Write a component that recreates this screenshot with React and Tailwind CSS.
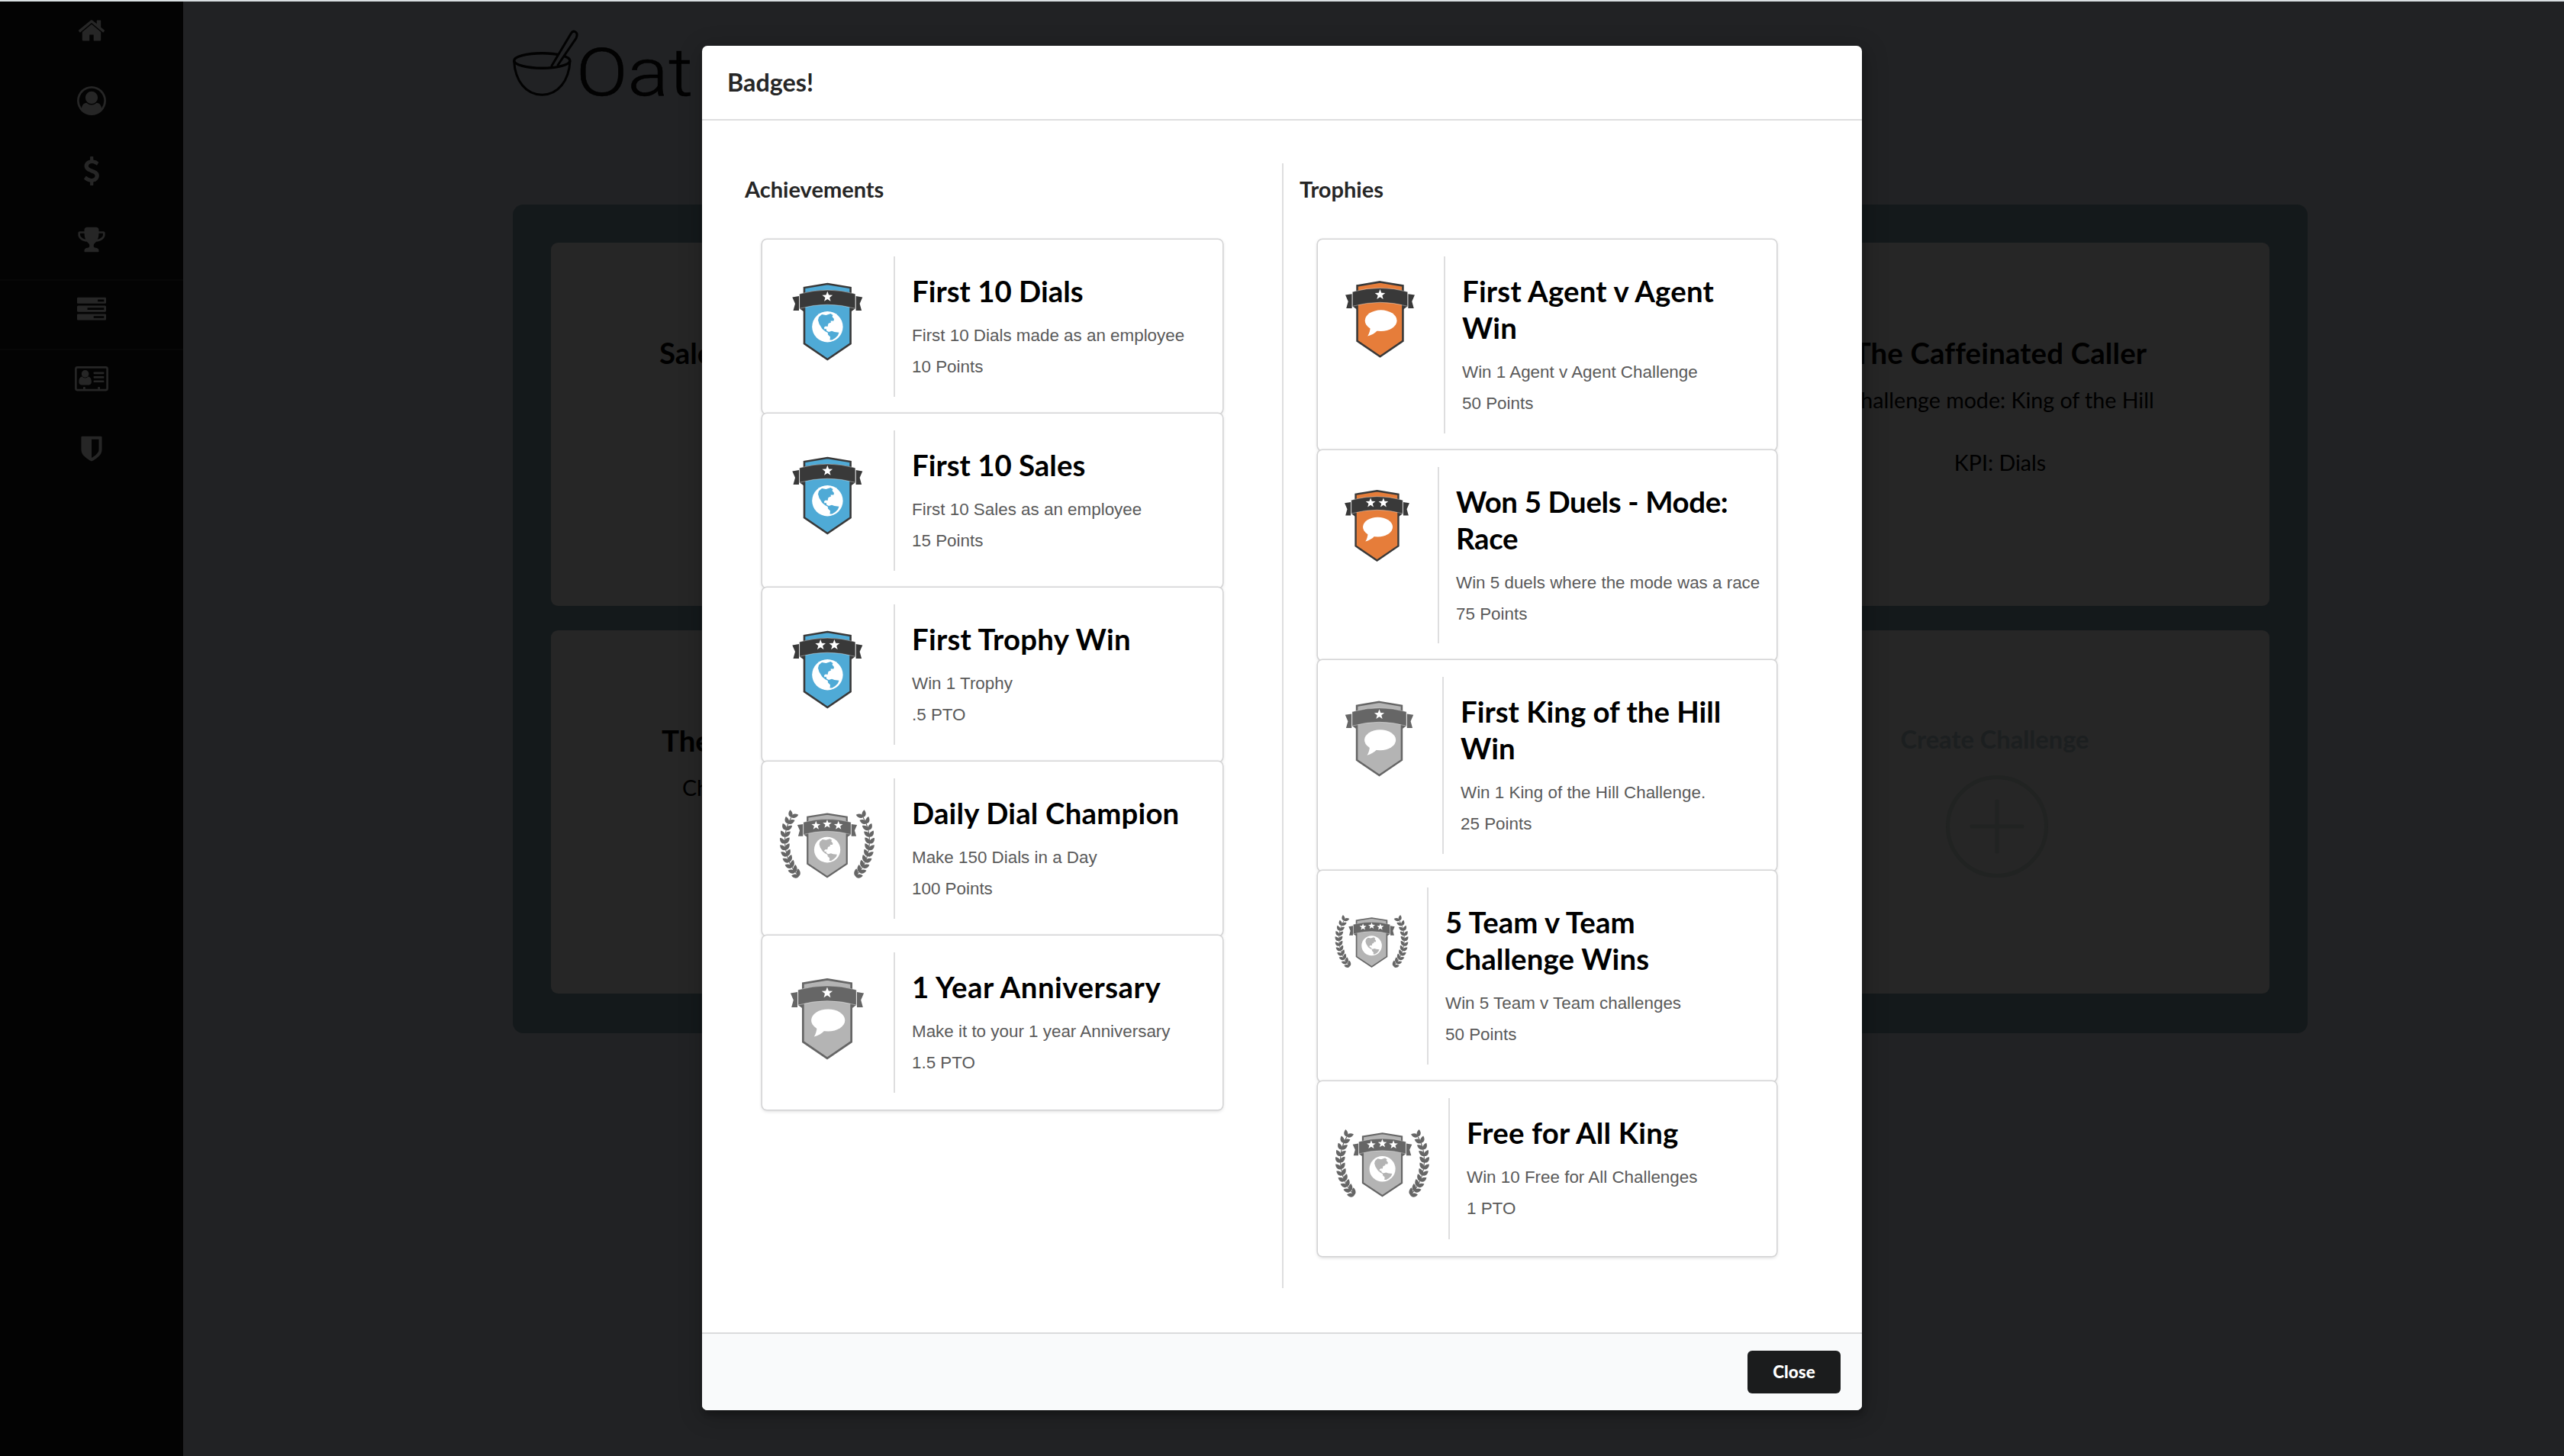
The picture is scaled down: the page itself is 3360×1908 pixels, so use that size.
import React from "react";

const achievements = [
  { title: "First 10 Dials", text: "First 10 Dials made as an employee", reward: "10 Points", art: "globe", tone: "blue", stars: 1 },
  { title: "First 10 Sales", text: "First 10 Sales as an employee", reward: "15 Points", art: "globe", tone: "blue", stars: 1 },
  { title: "First Trophy Win", text: "Win 1 Trophy", reward: ".5 PTO", art: "globe", tone: "blue", stars: 2, tracking: "tracking-[0.25px]" },
  { title: "Daily Dial Champion", text: "Make 150 Dials in a Day", reward: "100 Points", art: "laurel", tone: "gray", stars: 3, tracking: "tracking-[0.18px]" },
  { title: "1 Year Anniversary", text: "Make it to your 1 year Anniversary", reward: "1.5 PTO", art: "comment", tone: "gray", stars: 1, tracking: "tracking-[0.5px]" },
];

const trophies = [
  { title: "First Agent v Agent\nWin", text: "Win 1 Agent v Agent Challenge", reward: "50 Points", art: "comment", tone: "orange", stars: 1, size: "w-[121px]", height: "h-[276px]", tracking: "tracking-[0.2px]" },
  { title: "Won 5 Duels - Mode:\nRace", text: "Win 5 duels where the mode was a race", reward: "75 Points", art: "comment", tone: "orange", stars: 2, size: "w-[113px]", height: "h-[275px]", tracking: "tracking-[-0.35px]" },
  { title: "First King of the Hill\nWin", text: "Win 1 King of the Hill Challenge.", reward: "25 Points", art: "comment", tone: "gray", stars: 1, size: "w-[119px]", height: "h-[276px]" },
  { title: "5 Team v Team\nChallenge Wins", text: "Win 5 Team v Team challenges", reward: "50 Points", art: "laurel", tone: "gray", stars: 3, size: "w-[99px] mt-[4px]", height: "h-[276px]", tracking: "tracking-[0.1px]" },
  { title: "Free for All King", text: "Win 10 Free for All Challenges", reward: "1 PTO", art: "laurel", tone: "gray", stars: 3, size: "w-[127px]", height: "h-[229px]", tracking: "tracking-[0.2px]" },
];

const tones = {
  blue: { fill: "#4faad6", dark: "#393939" },
  orange: { fill: "#e67d3a", dark: "#393939" },
  gray: { fill: "#b4b4b4", dark: "#666666" },
};

function starPoints(cx, cy, r) {
  return Array.from({ length: 10 }, (_, i) => {
    const a = (Math.PI / 5) * i - Math.PI / 2;
    const q = i % 2 ? r * 0.42 : r;
    return `${(cx + q * Math.cos(a)).toFixed(2)},${(cy + q * Math.sin(a)).toFixed(2)}`;
  }).join(" ");
}

const starPlaces = {
  1: [[64.3, 53]],
  2: [[55.2, 53.2], [73.4, 53.2]],
  3: [[47, 54.2], [64.3, 52], [81.6, 54.2]],
};

// One side of the wreath: paired leaves along a curved stem.
const leaves = Array.from({ length: 11 }, (_, i) => {
  const t = i / 10;
  const u = 1 - t;
  const p = [[17, 51], [1, 78], [10, 112], [27, 128]];
  const b = [u * u * u, 3 * u * u * t, 3 * u * t * t, t * t * t];
  const x = p.reduce((s, q, k) => s + q[0] * b[k], 0);
  const y = p.reduce((s, q, k) => s + q[1] * b[k], 0);
  const d = [u * u, 2 * u * t, t * t];
  const dx = d.reduce((s, w, k) => s + w * (p[k + 1][0] - p[k][0]), 0);
  const dy = d.reduce((s, w, k) => s + w * (p[k + 1][1] - p[k][1]), 0);
  return { x, y, a: (Math.atan2(-dy, -dx) * 180) / Math.PI };
});

const LEAF = "M0 0C1.5-3.600 6-4.200 9.800 0C6 3.200 1.500 2.800 0 0Z";

function Wreath({ color }) {
  return (
    <g fill={color}>
      <path d="M17 51C1 78 10 112 27 128" fill="none" stroke={color} strokeWidth="1.1" />
      {leaves.map((l, i) => (
        <g key={i} transform={`translate(${l.x} ${l.y}) rotate(${l.a})`}>
          <path d={LEAF} transform="rotate(-40)" />
          <path d={LEAF} transform="rotate(40)" />
        </g>
      ))}
    </g>
  );
}

const place = {
  globe: undefined,
  comment: "translate(64 34) scale(1.045) translate(-64.3 -34.7)",
  laurel: "translate(64 45.5) scale(.85 .835) translate(-64.3 -34.7)",
};

function Badge({ art, tone, stars, className }) {
  const { fill, dark } = tones[tone];
  return (
    <svg viewBox="0 0 128 150" className={`block shrink-0 self-start ${className}`}>
      <g transform={place[art]}>
        <path d="M64.3 36L94.6 41V114.3L64.3 135L34 114.3V41Z" fill={fill} stroke={dark} strokeWidth="2.6" />
        <path d="M18.3 53.4L27 52V71H19.5L22 62Z" fill={dark} />
        <path d="M110.3 53.4L101.6 52V71H109.1L106.6 62Z" fill={dark} />
        <path d="M27.6 68.3L33.5 72.5V66Z M101 68.3L95.1 72.5V66Z" fill={dark} />
        <path d="M27.7 49.2Q64.3 39 100.9 49.2V68.3Q64.3 58 27.7 68.3Z" fill={dark} stroke="#fff" strokeOpacity=".55" strokeWidth=".7" />
        {starPlaces[stars].map(([x, y]) => (
          <polygon key={x} points={starPoints(x, y, 7.2)} fill="#fff" />
        ))}
        {art !== "comment" && (
          <g>
            <circle cx="64.4" cy="92.2" r="20.2" fill="#fff" />
            <path
              fill={fill}
              d="M53 79.5L57 76L62.5 77L68.5 75L71.5 77L70.5 79L73 82L72.5 84.5L68.5 84.5L69 86.5L65.5 88L64.5 92L62 91.5L59.8 93L60.5 95.5L62.5 94.8L63.3 97.5L66 99L70 97.8L73.5 99L79.5 99.8L78 103.5L74.5 107L70.5 109.5L67.5 109.5L68 105.5L65 102.5L64.8 100L61.5 98.2L57.5 95L53.5 88.5L52 83.5Z"
            />
          </g>
        )}
      </g>
      {art === "comment" && (
        <g fill="#fff">
          <ellipse cx="65.2" cy="89" rx="22.1" ry="14.6" />
          <path d="M50.500 97C50.500 102.500 49 107 46.800 110.500C52 109 57 106.500 60.500 102.500Z" />
        </g>
      )}
      {art === "laurel" && (
        <>
          <Wreath color={dark} />
          <g transform="translate(128 0) scale(-1 1)">
            <Wreath color={dark} />
          </g>
        </>
      )}
    </svg>
  );
}

function BadgeCard({ item }) {
  return (
    <div
      className={`flex w-full rounded-[6px] bg-white px-[21.5px] py-[22px] shadow-[0_0_0_1.6px_#d4d4d5,0_1.6px_4.8px_0_#d4d4d5] ${item.height || "h-[228px]"}`}
    >
      <Badge art={item.art} tone={item.tone} stars={item.stars} className={item.size || "w-[128px]"} />
      <div className="ml-[23px] w-[2px] shrink-0 bg-[#dededf]" />
      <div className="pl-[22px] pt-[21px]">
        <h3 className={`whitespace-pre font-[Lato,sans-serif] text-[38.4px] leading-[48px] font-bold text-black ${item.tracking || ""}`}>{item.title}</h3>
        <p className="mt-[14px] whitespace-nowrap font-['Liberation_Sans',sans-serif] text-[22.4px] leading-[41px] text-[#5a5a5a]">
          {item.text}
          <br />
          {item.reward}
        </p>
      </div>
    </div>
  );
}

const icons = [
  "M1472 992v480q0 26-19 45t-45 19h-384v-384h-256v384h-384q-26 0-45-19t-19-45v-480q0-1 .5-3t.5-3l575-474 575 474q1 2 1 6zm223-69l-62 74q-8 9-21 11h-3q-13 0-21-7l-692-577-692 577q-12 8-24 7-13-2-21-11l-62-74q-8-10-7-23.5t11-21.5l719-599q32-26 76-26t76 26l244 204v-195q0-14 9-23t23-9h192q14 0 23 9t9 23v408l219 182q10 8 11 21.5t-7 23.5z",
  "M896 0q182 0 348 71t286 191 191 286 71 348q0 181-70.5 347t-190.5 286-286 191.5-349 71.5-349-71-285.5-191.5-190.5-286-71-347.5 71-348 191-286 286-191 348-71zm619 1351q149-205 149-455 0-156-61-298t-164-245-245-164-298-61-298 61-245 164-164 245-61 298q0 250 149 455 66-327 306-327 131 128 313 128t313-128q240 0 306 327zm-235-647q0-159-112.5-271.5t-271.5-112.5-271.5 112.5-112.5 271.5 112.5 271.5 271.5 112.5 271.5-112.5 112.5-271.5z",
  "M1362 1185q0 153-99.5 263.5t-258.5 136.5v175q0 14-9 23t-23 9h-135q-13 0-22.5-9.5t-9.5-22.5v-175q-66-9-127.5-31t-101.5-44.5-74-48-46.5-37.5-17.5-18q-17-21-2-41l103-135q7-10 23-12 15-2 24 9l2 2q113 99 243 125 37 8 74 8 81 0 142.5-43t61.5-122q0-28-15-53t-33.5-42-58.5-37.5-66-32-80-32.5q-39-16-61.5-25t-61.5-26.5-62.5-31-56.5-35.5-53.5-42.5-43.5-49-35.5-58-21-66.5-8.5-78q0-138 98-242t255-134v-180q0-13 9.5-22.5t22.5-9.5h135q14 0 23 9t9 23v176q57 6 110.5 23t87 33.5 63.5 37.5 39 29 15 14q17 18 5 38l-81 146q-8 15-23 16-14 3-27-7-3-3-14.5-12t-39-26.5-58.5-32-74.5-26-85.5-11.5q-95 0-155 43t-60 111q0 26 8.5 48t29.5 41.5 39.5 33 56 31 60.5 27 70 27.5q53 20 81 31.5t76 35 75.5 42.5 62 50 53 63.5 31.5 76.5 13 94z",
  "M522 883q-74-162-74-371h-256v96q0 78 94.5 162t235.5 113zm1078-275v-96h-256q0 209-74 371 141-29 235.5-113t94.5-162zm128-128v128q0 71-41.5 143t-112 130-173 97.5-215.5 44.5q-42 54-95 95-38 34-52.5 72.5t-14.5 89.5q0 54 30.5 91t97.5 37q75 0 133.5 45.5t58.5 114.5v64q0 14-9 23t-23 9h-832q-14 0-23-9t-9-23v-64q0-69 58.5-114.5t133.5-45.5q67 0 97.5-37t30.5-91q0-51-14.5-89.5t-52.5-72.5q-53-41-95-95-113-5-215.5-44.5t-173-97.5-112-130-41.5-143v-128q0-40 28-68t68-28h288v-96q0-66 47-113t113-47h576q66 0 113 47t47 113v96h288q40 0 68 28t28 68z",
  "M1024 1408h640v-128h-640v128zm-384-512h1024v-128h-1024v128zm640-512h384v-128h-384v128zm512 832v256q0 26-19 45t-45 19h-1664q-26 0-45-19t-19-45v-256q0-26 19-45t45-19h1664q26 0 45 19t19 45zm0-512v256q0 26-19 45t-45 19h-1664q-26 0-45-19t-19-45v-256q0-26 19-45t45-19h1664q26 0 45 19t19 45zm0-512v256q0 26-19 45t-45 19h-1664q-26 0-45-19t-19-45v-256q0-26 19-45t45-19h1664q26 0 45 19t19 45z",
  null,
  "M1344 960v-640h-448v1137q119-63 213-137 235-184 235-360zm192-768v768q0 86-33.5 170.5t-83 150-118 127.5-126.5 103-121 77.5-89.5 49.5-42.5 20q-12 6-26 6t-26-6q-16-7-42.5-20t-89.5-49.5-121-77.5-126.5-103-118-127.5-83-150-33.5-170.5v-768q0-26 19-45t45-19h1152q26 0 45 19t19 45z",
];

function AddressCard() {
  return (
    <svg viewBox="0 0 44 38" className="h-[38px] w-[44px]" fill="#262626">
      <rect x="1.4" y="3.4" width="41.2" height="29.7" rx="2" fill="none" stroke="#262626" strokeWidth="2.7" />
      <ellipse cx="13.6" cy="11.9" rx="4.8" ry="4.9" />
      <path d="M9.6 15.6C6.5 16 5.3 19 5.3 22.6C5.3 24.8 6.6 26.4 8.6 26.4H18.6C20.6 26.4 21.9 24.8 21.9 22.6C21.9 19 20.7 16 17.6 15.6C15 18.2 12.2 18.2 9.6 15.6Z" />
      <rect x="24.6" y="9.6" width="13.8" height="2.7" rx=".7" />
      <rect x="24.6" y="15" width="13.8" height="2.7" rx=".7" />
      <rect x="24.6" y="20.4" width="13.8" height="2.7" rx=".7" />
      <rect x="11" y="29" width="2.8" height="4" rx=".7" />
      <rect x="30.2" y="29" width="2.8" height="4" rx=".7" />
    </svg>
  );
}

function Sidebar() {
  return (
    <nav className="w-[240px] shrink-0 bg-[#030303]">
      {icons.map((d, i) => (
        <div
          key={i}
          className={`flex h-[91.4px] justify-center border-b-2 ${i === 1 || i === 2 ? "pt-[20px]" : "pt-[19px]"} ${i === 3 || i === 4 ? "border-[#070707]" : "border-transparent"}`}
        >
          {d ? (
            <svg viewBox="0 0 1792 1792" className="h-[38px] w-[38px]" fill="#262626">
              <path d={d} />
            </svg>
          ) : (
            <AddressCard />
          )}
        </div>
      ))}
    </nav>
  );
}

function Logo() {
  return (
    <svg viewBox="0 0 300 100" className="block h-[100px] w-[300px] overflow-visible" fill="none" stroke="#020202" strokeWidth="3">
      <ellipse cx="38.3" cy="41.5" rx="36.6" ry="9.8" strokeWidth="3.4" />
      <path d="M1.6 42C3 68 17 86 38.3 86.3C59.5 86 73.5 68 75 42" />
      <path d="M50.5 49L76.5 5.5C79 1 85 3.5 84 9L83 12L58.5 48" fill="#212224" />
      <text
        x="83"
        y="87"
        textLength="153"
        lengthAdjust="spacingAndGlyphs"
        fill="#020202"
        strokeWidth=".6"
        className="font-[Roboto,'DejaVu_Sans',sans-serif] text-[87px] font-light"
      >
        Oat
      </text>
    </svg>
  );
}

function Challenge({ children, className = "" }) {
  return <div className={`h-[476px] w-[706px] rounded-[9px] bg-[#262626] ${className}`}>{children}</div>;
}

function Dashboard() {
  return (
    <main className="flex-1 bg-[#212224] pt-[36px] pl-[432px] font-[Lato,sans-serif] text-black">
      <Logo />
      <section className="mt-[130px] grid h-[1086px] w-[2352px] grid-cols-3 content-start gap-x-[67px] gap-y-[32px] rounded-[14px] bg-[#14191b] px-[50px] pt-[50px]">
        <Challenge className="pl-[142px] pt-[120px]">
          <h2 className="text-[38.4px] leading-[48px] font-bold">Sales</h2>
        </Challenge>
        <Challenge />
        <Challenge className="pt-[120px] text-center">
          <h2 className="text-[38.4px] leading-[48px] font-bold tracking-[0.15px]">The Caffeinated Caller</h2>
          <p className="mt-[18px] text-[28.6px] leading-[41px]">Challenge mode: King of the Hill</p>
          <p className="mt-[41px] text-[28.6px] leading-[41px]">KPI: Dials</p>
        </Challenge>
        <Challenge className="pl-[145px] pt-[120px]">
          <h2 className="text-[38.4px] leading-[48px] font-bold">The</h2>
          <p className="mt-[18px] pl-[27px] text-[28.6px] leading-[41px]">Challenge</p>
        </Challenge>
        <Challenge />
        <Challenge className="flex flex-col items-center pt-[123px] pr-[14px]">
          <h2 className="text-[32.6px] leading-[40px] font-bold text-[#1c1f20]">Create Challenge</h2>
          <svg viewBox="0 0 134 134" className="mt-[27px] ml-[6px] block h-[134px] w-[134px]" fill="none" stroke="#212322" strokeWidth="5" strokeLinecap="round">
            <circle cx="67" cy="67" r="64.5" />
            <path d="M34 67H100M67 34V100" />
          </svg>
        </Challenge>
      </section>
    </main>
  );
}

function Modal() {
  return (
    <div className="flex h-[1788px] w-[1520px] flex-col overflow-hidden rounded-[7px] bg-white font-[Lato,sans-serif] shadow-[2px_6px_6px_0_rgba(0,0,0,0.2),2px_6px_30px_4px_rgba(0,0,0,0.2)]">
      <header className="flex h-[98px] shrink-0 items-center border-b-2 border-[#dededf] pl-[33px] text-[32.3px] font-bold text-[#262626]">
        Badges!
      </header>
      <div className="flex flex-1 pt-[56px]">
        <section className="w-[760px] pl-[56px] pt-[14px]">
          <h2 className="text-[29px] leading-[40px] font-bold text-[#262626]">Achievements</h2>
          <div className="mt-[45.5px] ml-[22.5px] w-[603px]">
            {achievements.map((a) => (
              <BadgeCard key={a.title} item={a} />
            ))}
          </div>
        </section>
        <div className="h-[1474px] w-[2px] bg-[#dededf]" />
        <section className="flex-1 pl-[21px] pt-[14px]">
          <h2 className="text-[29px] leading-[40px] font-bold text-[#262626]">Trophies</h2>
          <div className="mt-[45.5px] ml-[23.5px] w-[601px]">
            {trophies.map((a) => (
              <BadgeCard key={a.title} item={a} />
            ))}
          </div>
        </section>
      </div>
      <footer className="flex h-[102px] shrink-0 items-center justify-end border-t-2 border-[#dadbdc] bg-[#f9fafb] pr-[28px]">
        <button className="h-[56px] w-[122px] rounded-[6px] bg-[#1b1c1d] text-[22.4px] font-black text-white">Close</button>
      </footer>
    </div>
  );
}

export default function App() {
  return (
    <div className="relative flex h-[1908px] w-[3360px] flex-col overflow-hidden">
      <div className="h-[2px] shrink-0 bg-[#d9dfe2]" />
      <div className="flex flex-1">
        <Sidebar />
        <Dashboard />
      </div>
      <div className="absolute inset-0 flex justify-center pt-[60px]">
        <Modal />
      </div>
    </div>
  );
}
